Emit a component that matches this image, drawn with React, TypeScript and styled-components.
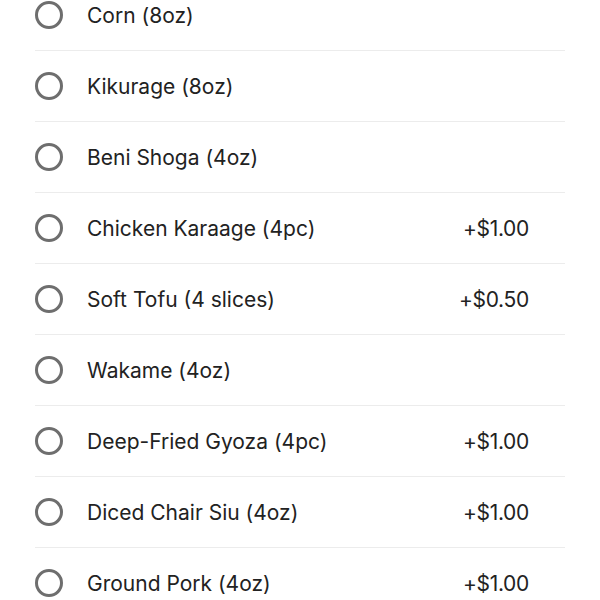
import * as React from 'react';
import styled, { createGlobalStyle } from 'styled-components';

type Option = {
  name: string,
  price?: string,
};

const GlobalStyle = createGlobalStyle`
  html, body {
    margin: 0;
    padding: 0;
    background: #ffffff;
    overflow: hidden;
  }
  body {
    font-family: Inter, "Noto Sans", "Liberation Sans", sans-serif;
    color: #222222;
  }
`;

const List = styled.div`
  display: flex;
  flex-direction: column;
  margin-top: -20px;
  padding: 0 35px;
`;

const Row = styled.label`
  display: flex;
  align-items: center;
  height: 70px;
  border-bottom: 1px solid #ececec;
  padding-right: 36px;
  cursor: pointer;
`;

const Radio = styled.span`
  flex: none;
  width: 22px;
  height: 22px;
  border: 3px solid #6e6e6e;
  border-radius: 50%;
  margin-right: 24px;
`;

const Name = styled.div`
  flex: 1;
  font-size: 21px;
`;

const Price = styled.div`
  font-size: 21px;
  letter-spacing: -0.3px;
`;

const options: Array<Option> = [
  { name: 'Corn (8oz)' },
  { name: 'Kikurage (8oz)' },
  { name: 'Beni Shoga (4oz)' },
  { name: 'Chicken Karaage (4pc)', price: '+$1.00' },
  { name: 'Soft Tofu (4 slices)', price: '+$0.50' },
  { name: 'Wakame (4oz)' },
  { name: 'Deep-Fried Gyoza (4pc)', price: '+$1.00' },
  { name: 'Diced Chair Siu (4oz)', price: '+$1.00' },
  { name: 'Ground Pork (4oz)', price: '+$1.00' },
];

const App: React.FC = () => (
  <>
    <GlobalStyle />
    <List>
      {options.map((option: Option) => (
        <Row key={option.name}>
          <Radio />
          <Name>{option.name}</Name>
          {option.price && <Price>{option.price}</Price>}
        </Row>
      ))}
    </List>
  </>
);

export default App;
